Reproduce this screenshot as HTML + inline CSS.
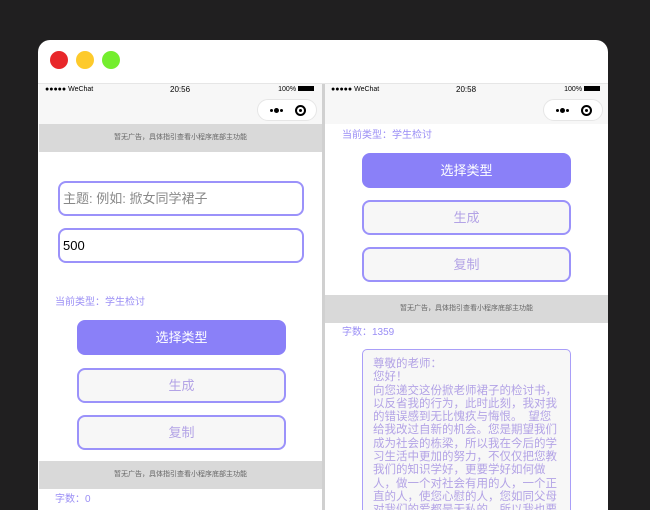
<!DOCTYPE html>
<html><head><meta charset="utf-8"><style>
*{margin:0;padding:0;box-sizing:border-box}
body{width:650px;height:500px;background:#201f20;position:relative;overflow:hidden;font-family:"Liberation Sans","Noto Sans CJK SC",sans-serif}
.win{position:absolute;left:38px;top:40px;width:570px;height:470px;background:#fff;border-radius:12px 12px 0 0;overflow:hidden}
.dot{position:absolute;top:11px;width:18px;height:18px;border-radius:50%}
.ph{position:absolute;top:44px;height:430px;background:#fff;overflow:hidden}
.sb{position:absolute;left:0;right:0;top:0;height:12px;background:#f7f7f7;font-size:7px;color:#000}
.nav{position:absolute;left:0;right:0;top:12px;height:28px;background:#f7f7f7}
.cap{position:absolute;right:5px;top:3px;width:60px;height:22px;border:1px solid #e6e6e6;border-radius:11px;background:#fff}
.cap i.d{position:absolute;top:9px;width:3px;height:3px;background:#000;border-radius:50%}
.ad{position:absolute;left:0;right:0;height:28px;background:#d9d9d9;font-size:7px;color:#666;text-align:center;line-height:28px}
.inp{position:absolute;border:2px solid #9b92fa;border-radius:8px;height:35px;font-size:13px;line-height:31px;padding-left:3px;background:#fff}
.btn{position:absolute;width:209px;height:35px;border-radius:8px;border:2px solid #9b92fa;background:#f7f7f7;color:#b3a3e6;font-size:13px;text-align:center;line-height:31px}
.btn.p{background:#8a80f8;color:#fff;border-color:#8a80f8}
.lab{position:absolute;font-size:10px;color:#9a8ef5}
</style></head><body>
<div class="win">
 <div class="dot" style="left:12px;background:#e8272a"></div>
 <div class="dot" style="left:38px;background:#fdca2b"></div>
 <div class="dot" style="left:64px;background:#74ee2e"></div>
 <div style="position:absolute;left:0;right:0;top:43px;height:1px;background:#e6e6e6"></div>
 <div style="position:absolute;left:284px;top:44px;width:3px;height:430px;background:#d0d0d0"></div>
 <!-- left phone -->
 <div class="ph" style="left:1px;width:283px">
  <div class="sb"><span style="position:absolute;left:6px;top:2px">●●●●● WeChat</span><span style="position:absolute;left:131px;top:1px;font-size:8px">20:56</span><span style="position:absolute;right:8px;top:2px">100% <b style="display:inline-block;width:16px;height:5px;background:#000"></b></span></div>
  <div class="nav"><div class="cap"><i class="d" style="left:12px"></i><i class="d" style="left:16px;width:5px;height:5px;top:8px"></i><i class="d" style="left:22px"></i><span style="position:absolute;left:37px;top:5px;width:11px;height:11px;border:2px solid #000;border-radius:50%"><i style="position:absolute;left:2px;top:2px;width:3px;height:3px;background:#000;border-radius:50%"></i></span></div></div>
  <div class="ad" style="top:40px">暂无广告，具体指引查看小程序底部主功能</div>
  <div class="inp" style="left:19px;top:97px;width:246px;color:#888">主题: 例如: 掀女同学裙子</div>
  <div class="inp" style="left:19px;top:144px;width:246px;color:#000">500</div>
  <div class="lab" style="left:16px;top:209px">当前类型：学生检讨</div>
  <div class="btn p" style="left:38px;top:236px">选择类型</div>
  <div class="btn" style="left:38px;top:284px">生成</div>
  <div class="btn" style="left:38px;top:331px">复制</div>
  <div class="ad" style="top:377px">暂无广告，具体指引查看小程序底部主功能</div>
  <div class="lab" style="left:16px;top:406px">字数：0</div>
 </div>
 <!-- right phone -->
 <div class="ph" style="left:287px;width:283px">
  <div class="sb"><span style="position:absolute;left:6px;top:2px">●●●●● WeChat</span><span style="position:absolute;left:131px;top:1px;font-size:8px">20:58</span><span style="position:absolute;right:8px;top:2px">100% <b style="display:inline-block;width:16px;height:5px;background:#000"></b></span></div>
  <div class="nav"><div class="cap"><i class="d" style="left:12px"></i><i class="d" style="left:16px;width:5px;height:5px;top:8px"></i><i class="d" style="left:22px"></i><span style="position:absolute;left:37px;top:5px;width:11px;height:11px;border:2px solid #000;border-radius:50%"><i style="position:absolute;left:2px;top:2px;width:3px;height:3px;background:#000;border-radius:50%"></i></span></div></div>
  <div class="lab" style="left:17px;top:42px">当前类型：学生检讨</div>
  <div class="btn p" style="left:37px;top:69px">选择类型</div>
  <div class="btn" style="left:37px;top:116px">生成</div>
  <div class="btn" style="left:37px;top:163px">复制</div>
  <div class="ad" style="top:211px">暂无广告，具体指引查看小程序底部主功能</div>
  <div class="lab" style="left:17px;top:239px">字数：1359</div>
  <div style="position:absolute;left:37px;top:265px;width:209px;height:180px;border:1.5px solid #a99ef8;border-radius:5px;background:#f7f7f7;color:#b3a3e6;font-size:11.5px;line-height:13.3px;padding:8px 12px 0 10px">尊敬的老师：<br>您好！<br>向您递交这份掀老师裙子的检讨书，以反省我的行为，此时此刻，我对我的错误感到无比愧疚与悔恨。　望您给我改过自新的机会。您是期望我们成为社会的栋梁，所以我在今后的学习生活中更加的努力，不仅仅把您教我们的知识学好，更要学好如何做人，做一个对社会有用的人，一个正直的人，使您心慰的人，您如同父母对我们的爱都是无私的，所以我也要</div>
 </div>
</div>
</body></html>
